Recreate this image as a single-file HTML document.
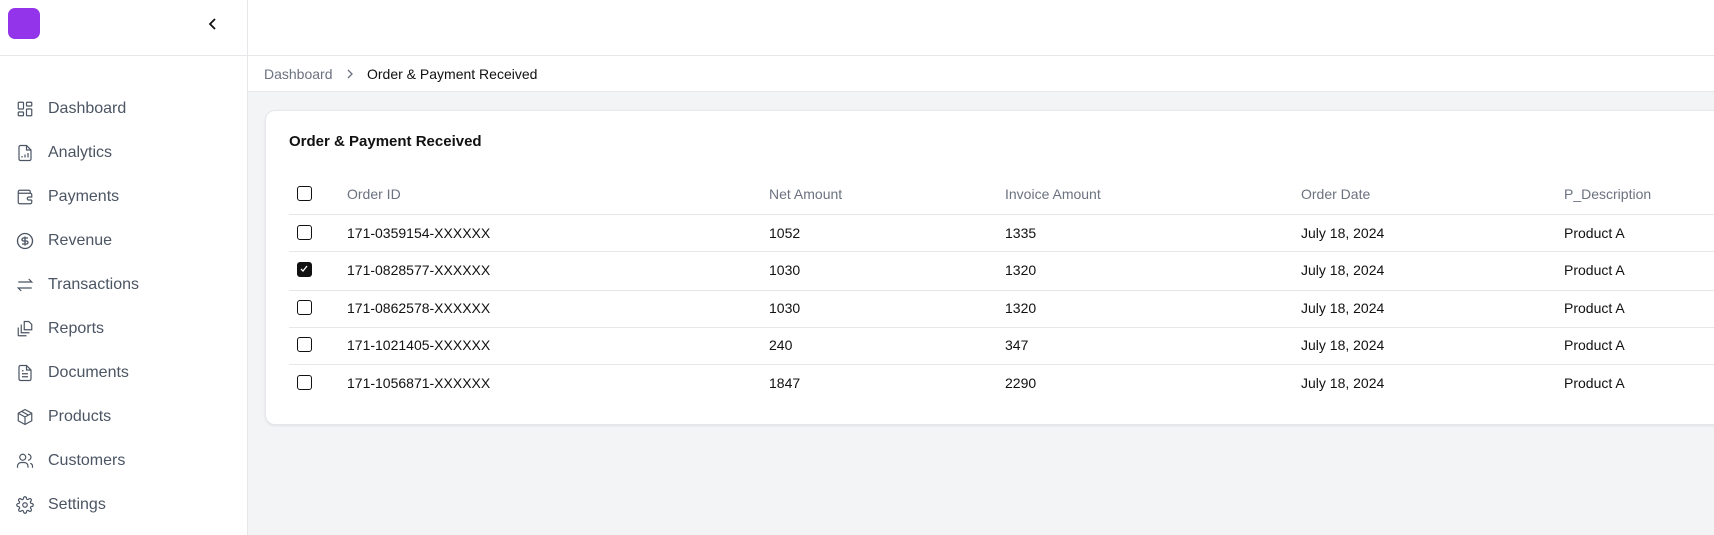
<!DOCTYPE html>
<html><head><style>
*{margin:0;padding:0;box-sizing:border-box}
body{width:1714px;height:535px;overflow:hidden;font-family:"Liberation Sans",Arial,sans-serif;background:#f3f4f6;position:relative}
.side{position:absolute;left:0;top:0;width:248px;height:535px;background:#fff;border-right:1px solid #e5e7eb}
.logo{position:absolute;left:8px;top:8px;width:32px;height:31px;border-radius:7px;background:#9333ea}
.hline{position:absolute;left:0;top:55px;width:1714px;height:1px;background:#e5e7eb}
.top{position:absolute;left:248px;top:0;width:1466px;height:92px;background:#fff;border-bottom:1px solid #e5e7eb}
.nav{position:absolute;left:0;font-size:16px;color:#4b5563;height:24px;line-height:24px}
.nav svg{position:absolute;left:16px;top:3px}
.nav span{position:absolute;left:48px;white-space:nowrap}
.bc{position:absolute;top:66px;font-size:14px;line-height:16px}
.card{position:absolute;left:265px;top:110px;width:1470px;height:315px;background:#fff;border:1px solid #e5e7eb;border-radius:10px;box-shadow:0 1px 2px rgba(0,0,0,.08)}
.t{position:absolute;font-size:14px;line-height:16px;color:#111;white-space:nowrap}
.h{color:#6b7280}
.cb{position:absolute;left:297px;width:15px;height:15px;border:1.5px solid #111;border-radius:3px;background:#fff}
.cb.on{background:#111}
.rl{position:absolute;left:289px;width:1425px;height:1px;background:#e5e7eb}
</style></head><body>
<div class="side">
<div class="logo"></div>
<svg style="position:absolute;left:206px;top:17px" width="14" height="14" viewBox="0 0 14 14"><path d="M9 2L4 7l5 5" fill="none" stroke="#111" stroke-width="1.8"/></svg>
</div>
<div class="top"></div>
<div class="hline"></div>
<div class="bc" style="left:264px;color:#6b7280">Dashboard</div>
<svg style="position:absolute;left:345px;top:69px" width="10" height="10" viewBox="0 0 10 10"><path d="M3 1l4 4-4 4" fill="none" stroke="#6b7280" stroke-width="1.3"/></svg>
<div class="bc" style="left:367px;color:#111">Order &amp; Payment Received</div>

<div class="nav" style="top:97px"><svg width="18" height="18" viewBox="0 0 24 24" fill="none" stroke="#4b5563" stroke-width="1.6"><rect x="3" y="3" width="7" height="9" rx="1"/><rect x="14" y="3" width="7" height="5" rx="1"/><rect x="14" y="12" width="7" height="9" rx="1"/><rect x="3" y="16" width="7" height="5" rx="1"/></svg><span>Dashboard</span></div>
<div class="nav" style="top:141px"><svg width="18" height="18" viewBox="0 0 24 24" fill="none" stroke="#4b5563" stroke-width="1.6"><path d="M14 2H6a2 2 0 0 0-2 2v16a2 2 0 0 0 2 2h12a2 2 0 0 0 2-2V8z"/><path d="M14 2v6h6M8 18v-2M12 18v-4M16 18v-6"/></svg><span>Analytics</span></div>
<div class="nav" style="top:185px"><svg width="18" height="18" viewBox="0 0 24 24" fill="none" stroke="#4b5563" stroke-width="1.6"><path d="M19 7V5a2 2 0 0 0-2-2H5a2 2 0 0 0-2 2v14a2 2 0 0 0 2 2h14a2 2 0 0 0 2-2v-3"/><path d="M3 7h16a2 2 0 0 1 2 2v3h-4a2 2 0 0 0 0 4h4"/></svg><span>Payments</span></div>
<div class="nav" style="top:229px"><svg width="18" height="18" viewBox="0 0 24 24" fill="none" stroke="#4b5563" stroke-width="1.8"><circle cx="12" cy="12" r="10"/><path d="M16 8h-6a2 2 0 0 0 0 4h4a2 2 0 0 1 0 4H8M12 6v12"/></svg><span>Revenue</span></div>
<div class="nav" style="top:273px"><svg width="18" height="18" viewBox="0 0 24 24" fill="none" stroke="#4b5563" stroke-width="1.6"><path d="M3 8h18l-4-4M21 16H3l4 4"/></svg><span>Transactions</span></div>
<div class="nav" style="top:317px"><svg width="18" height="18" viewBox="0 0 24 24" fill="none" stroke="#4b5563" stroke-width="1.6"><path d="M3 10v10a1 1 0 0 0 1 1h10M7 6v11h11"/><path d="M11 2h6l4 4v7H11z"/></svg><span>Reports</span></div>
<div class="nav" style="top:361px"><svg width="18" height="18" viewBox="0 0 24 24" fill="none" stroke="#4b5563" stroke-width="1.6"><path d="M14 2H6a2 2 0 0 0-2 2v16a2 2 0 0 0 2 2h12a2 2 0 0 0 2-2V8z"/><path d="M14 2v6h6M8 13h8M8 17h8M8 9h2"/></svg><span>Documents</span></div>
<div class="nav" style="top:405px"><svg width="18" height="18" viewBox="0 0 24 24" fill="none" stroke="#4b5563" stroke-width="1.6"><path d="M12 2l9 5v10l-9 5-9-5V7z"/><path d="M3 7l9 5 9-5M12 12v10M7.5 4.5l9 5"/></svg><span>Products</span></div>
<div class="nav" style="top:449px"><svg width="18" height="18" viewBox="0 0 24 24" fill="none" stroke="#4b5563" stroke-width="1.6"><circle cx="9" cy="7" r="4"/><path d="M2 21v-2a5 5 0 0 1 5-5h4a5 5 0 0 1 5 5v2M16 3a4 4 0 0 1 0 8M22 21v-2a4 4 0 0 0-3-3.9"/></svg><span>Customers</span></div>
<div class="nav" style="top:493px"><svg width="18" height="18" viewBox="0 0 24 24" fill="none" stroke="#4b5563" stroke-width="1.6"><circle cx="12" cy="12" r="3"/><path d="M19.4 15a1.7 1.7 0 0 0 .3 1.8l.1.1a2 2 0 1 1-2.8 2.8l-.1-.1a1.7 1.7 0 0 0-1.8-.3 1.7 1.7 0 0 0-1 1.5V21a2 2 0 1 1-4 0v-.1a1.7 1.7 0 0 0-1.1-1.5 1.7 1.7 0 0 0-1.8.3l-.1.1a2 2 0 1 1-2.8-2.8l.1-.1a1.7 1.7 0 0 0 .3-1.8 1.7 1.7 0 0 0-1.5-1H3a2 2 0 1 1 0-4h.1a1.7 1.7 0 0 0 1.5-1.1 1.7 1.7 0 0 0-.3-1.8l-.1-.1a2 2 0 1 1 2.8-2.8l.1.1a1.7 1.7 0 0 0 1.8.3H9a1.7 1.7 0 0 0 1-1.5V3a2 2 0 1 1 4 0v.1a1.7 1.7 0 0 0 1 1.5 1.7 1.7 0 0 0 1.8-.3l.1-.1a2 2 0 1 1 2.8 2.8l-.1.1a1.7 1.7 0 0 0-.3 1.8V9a1.7 1.7 0 0 0 1.5 1H21a2 2 0 1 1 0 4h-.1a1.7 1.7 0 0 0-1.5 1z"/></svg><span>Settings</span></div>

<div class="card"></div>
<div class="t" style="left:289px;top:134px;font-size:15px;font-weight:bold">Order &amp; Payment Received</div>

<div class="cb" style="top:186px"></div>
<div class="t h" style="left:347px;top:186px">Order ID</div>
<div class="t h" style="left:769px;top:186px">Net Amount</div>
<div class="t h" style="left:1005px;top:186px">Invoice Amount</div>
<div class="t h" style="left:1301px;top:186px">Order Date</div>
<div class="t h" style="left:1564px;top:186px">P_Description</div>
<div class="rl" style="top:214px"></div>

<div class="cb" style="top:225px"></div>
<div class="t" style="left:347px;top:225px">171-0359154-XXXXXX</div><div class="t" style="left:769px;top:225px">1052</div><div class="t" style="left:1005px;top:225px">1335</div><div class="t" style="left:1301px;top:225px">July 18, 2024</div><div class="t" style="left:1564px;top:225px">Product A</div>
<div class="rl" style="top:251px"></div>

<div class="cb on" style="top:262px"><svg style="position:absolute;left:1px;top:1px" width="10" height="10" viewBox="0 0 10 10"><path d="M2 5l2 2 4-5" fill="none" stroke="#fff" stroke-width="1.3"/></svg></div>
<div class="t" style="left:347px;top:262px">171-0828577-XXXXXX</div><div class="t" style="left:769px;top:262px">1030</div><div class="t" style="left:1005px;top:262px">1320</div><div class="t" style="left:1301px;top:262px">July 18, 2024</div><div class="t" style="left:1564px;top:262px">Product A</div>
<div class="rl" style="top:290px"></div>

<div class="cb" style="top:300px"></div>
<div class="t" style="left:347px;top:300px">171-0862578-XXXXXX</div><div class="t" style="left:769px;top:300px">1030</div><div class="t" style="left:1005px;top:300px">1320</div><div class="t" style="left:1301px;top:300px">July 18, 2024</div><div class="t" style="left:1564px;top:300px">Product A</div>
<div class="rl" style="top:327px"></div>

<div class="cb" style="top:337px"></div>
<div class="t" style="left:347px;top:337px">171-1021405-XXXXXX</div><div class="t" style="left:769px;top:337px">240</div><div class="t" style="left:1005px;top:337px">347</div><div class="t" style="left:1301px;top:337px">July 18, 2024</div><div class="t" style="left:1564px;top:337px">Product A</div>
<div class="rl" style="top:364px"></div>

<div class="cb" style="top:375px"></div>
<div class="t" style="left:347px;top:375px">171-1056871-XXXXXX</div><div class="t" style="left:769px;top:375px">1847</div><div class="t" style="left:1005px;top:375px">2290</div><div class="t" style="left:1301px;top:375px">July 18, 2024</div><div class="t" style="left:1564px;top:375px">Product A</div>
</body></html>
